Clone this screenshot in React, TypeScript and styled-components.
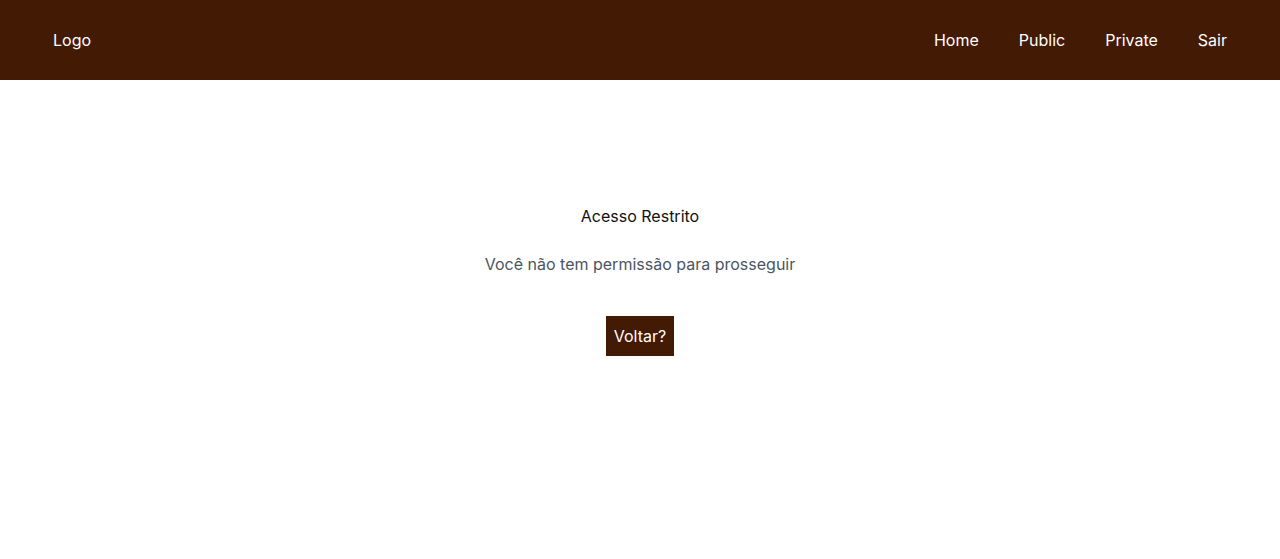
import React from "react";
import styled, { createGlobalStyle } from "styled-components";

const GlobalStyle = createGlobalStyle`
  * { box-sizing: border-box; }
  body {
    margin: 0;
    font-family: Inter, "Noto Sans", sans-serif;
    background: #ffffff;
  }
`;

const Header = styled.header`
  height: 80px;
  background: #431a03;
  display: flex;
  align-items: center;
  justify-content: space-between;
  padding: 0 53px;
  color: #ffffff;
  font-size: 16px;
  font-weight: 400;
`;

const Logo = styled.div`
  line-height: 24px;
`;

const Nav = styled.nav`
  display: flex;
  gap: 40px;
`;

const NavLink = styled.a`
  color: #ffffff;
  text-decoration: none;
  line-height: 24px;
  cursor: pointer;
`;

const Main = styled.main`
  display: flex;
  flex-direction: column;
  align-items: center;
  padding-top: 126px;
`;

const Title = styled.h1`
  margin: 0;
  font-size: 16px;
  font-weight: 400;
  line-height: 20px;
  color: #111111;
`;

const Message = styled.p`
  margin: 28px 0 0;
  font-size: 16px;
  line-height: 20px;
  color: #4b5563;
`;

const BackButton = styled.button`
  margin-top: 42px;
  height: 40px;
  padding: 0 8px;
  border: none;
  background: #431a03;
  color: #ffffff;
  font-family: inherit;
  font-size: 16px;
  font-weight: 400;
  cursor: pointer;
`;

export default function App() {
  return (
    <>
      <GlobalStyle />
      <Header>
        <Logo>Logo</Logo>
        <Nav>
          <NavLink>Home</NavLink>
          <NavLink>Public</NavLink>
          <NavLink>Private</NavLink>
          <NavLink>Sair</NavLink>
        </Nav>
      </Header>
      <Main>
        <Title>Acesso Restrito</Title>
        <Message>Você não tem permissão para prosseguir</Message>
        <BackButton>Voltar?</BackButton>
      </Main>
    </>
  );
}
